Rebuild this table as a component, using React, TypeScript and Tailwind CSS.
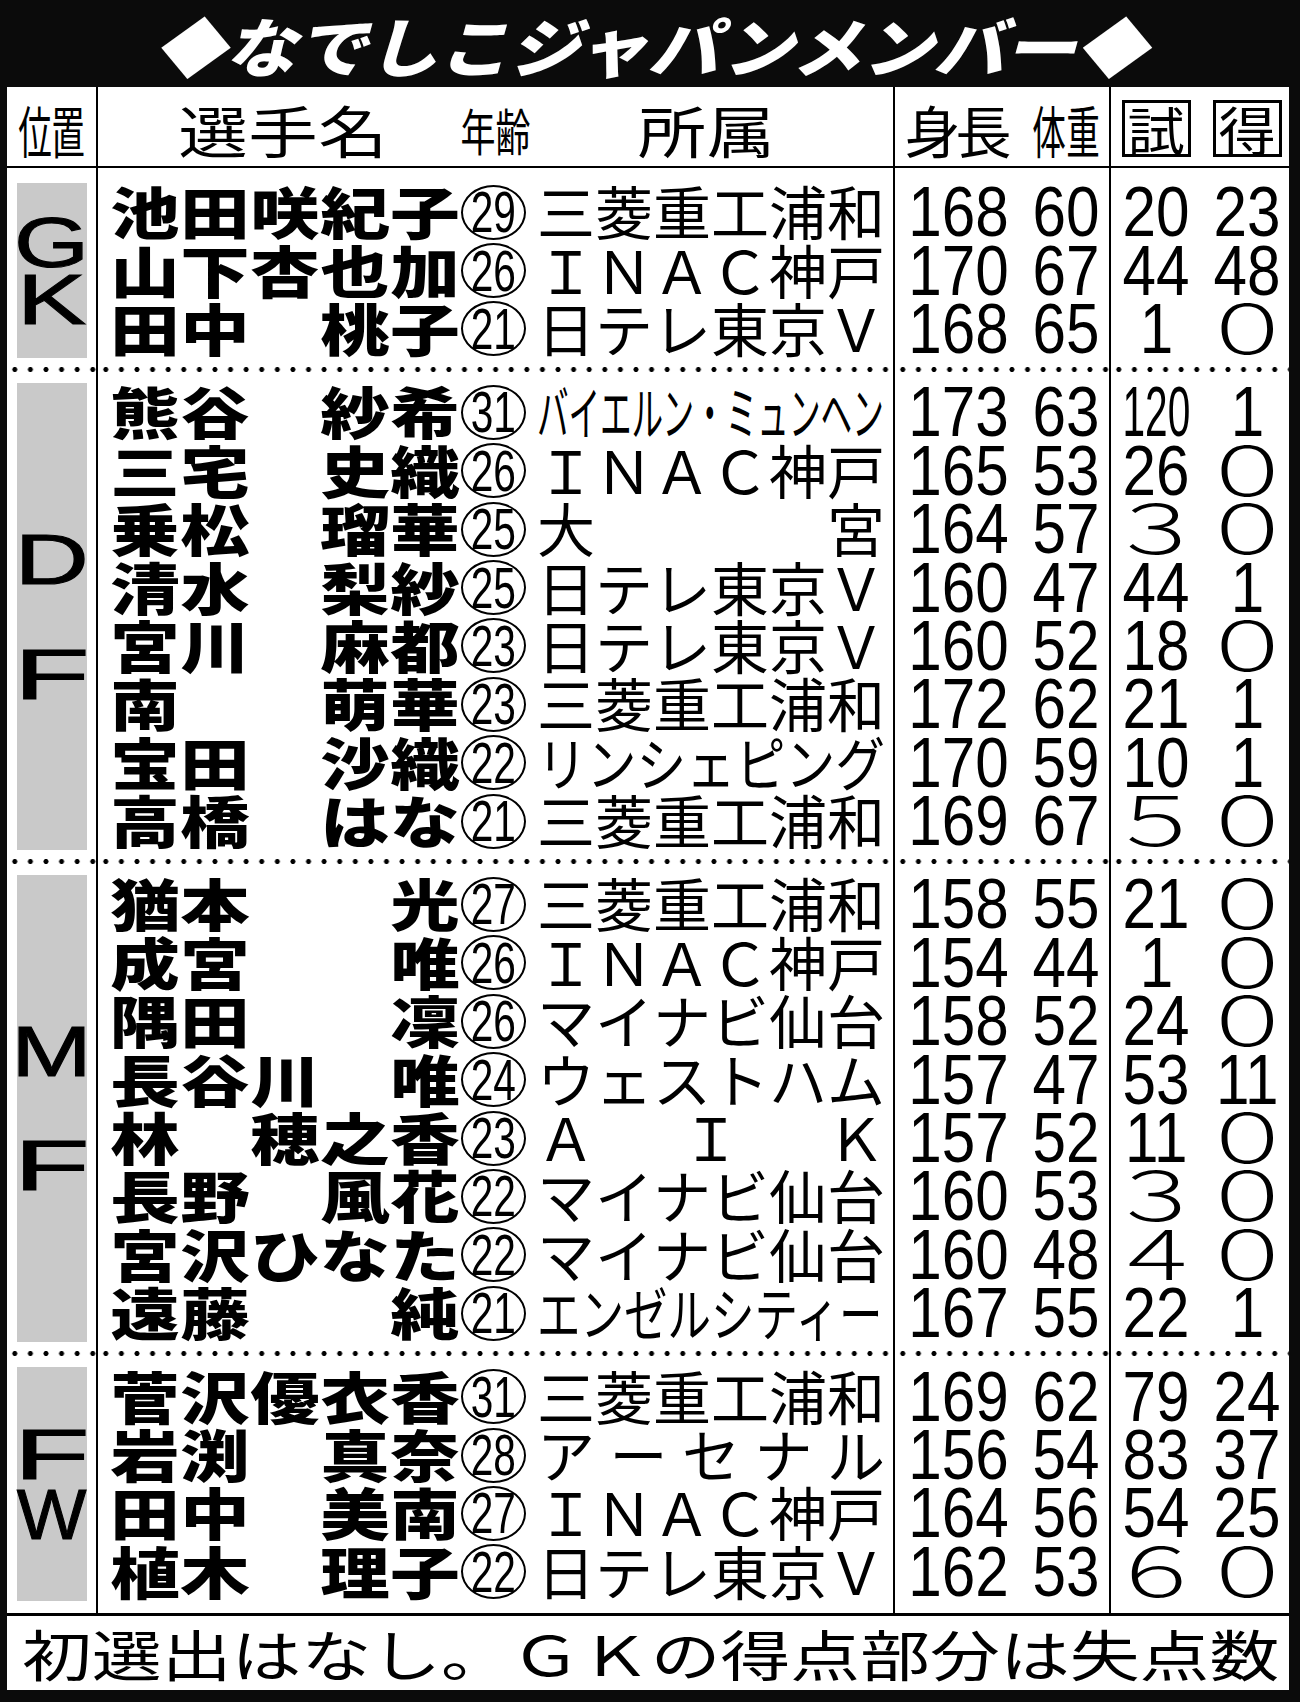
import React from "react";

type Row = {
  name: string;
  age: string;
  club: string;
  h: string;
  w: string;
  caps: string;
  goals: string;
};

type Letter = { c: string; s: string };

type Section = {
  letters: Letter[];
  gap: string;
  pad: string;
  rows: Row[];
};

const JP = "font-['Noto_Sans_CJK_JP','Noto_Sans_CJK_SC',sans-serif]";
const LIB = "font-['Liberation_Sans',Arial,sans-serif]";

const FIT: Record<string, string> = {
  "バイエルン・ミュンヘン": "scale-x-[0.545]",
  "リンシェピング": "scale-x-[0.857]",
  "エンゼルシティー": "scale-x-[0.75]",
};

const sections: Section[] = [
  {
    letters: [
      { c: "G", s: "scale-x-[1.36]" },
      { c: "K", s: "scale-x-[1.46]" },
    ],
    gap: "gap-[6px]",
    pad: "pt-[15px] pb-[9px]",
    rows: [
      { name: "池田咲紀子", age: "29", club: "三菱重工浦和", h: "168", w: "60", caps: "20", goals: "23" },
      { name: "山下杏也加", age: "26", club: "ＩＮＡＣ神戸", h: "170", w: "67", caps: "44", goals: "48" },
      { name: "田中　桃子", age: "21", club: "日テレ東京Ｖ", h: "168", w: "65", caps: "1", goals: "０" },
    ],
  },
  {
    letters: [
      { c: "D", s: "scale-x-[1.45]" },
      { c: "F", s: "scale-x-[1.75]" },
    ],
    gap: "gap-[64px]",
    pad: "pt-[11px] pb-[9px]",
    rows: [
      { name: "熊谷　紗希", age: "31", club: "バイエルン・ミュンヘン", h: "173", w: "63", caps: "120", goals: "1" },
      { name: "三宅　史織", age: "26", club: "ＩＮＡＣ神戸", h: "165", w: "53", caps: "26", goals: "０" },
      { name: "乗松　瑠華", age: "25", club: "大宮", h: "164", w: "57", caps: "３", goals: "０" },
      { name: "清水　梨紗", age: "25", club: "日テレ東京Ｖ", h: "160", w: "47", caps: "44", goals: "1" },
      { name: "宮川　麻都", age: "23", club: "日テレ東京Ｖ", h: "160", w: "52", caps: "18", goals: "０" },
      { name: "南　　萌華", age: "23", club: "三菱重工浦和", h: "172", w: "62", caps: "21", goals: "1" },
      { name: "宝田　沙織", age: "22", club: "リンシェピング", h: "170", w: "59", caps: "10", goals: "1" },
      { name: "高橋　はな", age: "21", club: "三菱重工浦和", h: "169", w: "67", caps: "５", goals: "０" },
    ],
  },
  {
    letters: [
      { c: "M", s: "scale-x-[1.36]" },
      { c: "F", s: "scale-x-[1.75]" },
    ],
    gap: "gap-[63px]",
    pad: "pt-[11px] pb-[9px]",
    rows: [
      { name: "猶本　　光", age: "27", club: "三菱重工浦和", h: "158", w: "55", caps: "21", goals: "０" },
      { name: "成宮　　唯", age: "26", club: "ＩＮＡＣ神戸", h: "154", w: "44", caps: "1", goals: "０" },
      { name: "隅田　　凜", age: "26", club: "マイナビ仙台", h: "158", w: "52", caps: "24", goals: "０" },
      { name: "長谷川　唯", age: "24", club: "ウェストハム", h: "157", w: "47", caps: "53", goals: "11" },
      { name: "林　穂之香", age: "23", club: "ＡＩＫ", h: "157", w: "52", caps: "11", goals: "０" },
      { name: "長野　風花", age: "22", club: "マイナビ仙台", h: "160", w: "53", caps: "３", goals: "０" },
      { name: "宮沢ひなた", age: "22", club: "マイナビ仙台", h: "160", w: "48", caps: "４", goals: "０" },
      { name: "遠藤　　純", age: "21", club: "エンゼルシティー", h: "167", w: "55", caps: "22", goals: "1" },
    ],
  },
  {
    letters: [
      { c: "F", s: "scale-x-[1.75]" },
      { c: "W", s: "scale-x-[1.04]" },
    ],
    gap: "gap-[9px]",
    pad: "pt-[11px] pb-[12px]",
    rows: [
      { name: "菅沢優衣香", age: "31", club: "三菱重工浦和", h: "169", w: "62", caps: "79", goals: "24" },
      { name: "岩渕　真奈", age: "28", club: "アーセナル", h: "156", w: "54", caps: "83", goals: "37" },
      { name: "田中　美南", age: "27", club: "ＩＮＡＣ神戸", h: "164", w: "56", caps: "54", goals: "25" },
      { name: "植木　理子", age: "22", club: "日テレ東京Ｖ", h: "162", w: "53", caps: "６", goals: "０" },
    ],
  },
];

function Club({ text }: { text: string }) {
  const fit = FIT[text];
  if (fit) {
    return (
      <div className="w-[348px] overflow-visible flex items-center">
        <span className={`block origin-left whitespace-nowrap text-[58px] leading-none -translate-y-[2px] ${fit}`}>{text}</span>
      </div>
    );
  }
  const chars = [...text];
  return (
    <div className="w-[348px] flex items-center justify-between">
      {chars.map((ch, i) => (
        <span key={i} className="w-[58px] shrink-0 text-center text-[58px] leading-none -translate-y-[2px]">
          {ch}
        </span>
      ))}
    </div>
  );
}

function Num({ v, w }: { v: string; w: string }) {
  const full = /[０-９]/.test(v);
  if (full) {
    return (
      <div className={`${w} shrink-0 flex justify-center items-center`}>
        <span
          className={`inline-block tracking-[-0.35em] scale-x-[1.45] -translate-x-[17px] -translate-y-[4px] text-[68px] leading-[58px] font-light ${JP}`}
        >
          {v}
        </span>
      </div>
    );
  }
  const sc = v.length === 3 && w === "w-[66px]" ? "scale-x-[0.58]" : "scale-x-[0.86]";
  return (
    <div className={`${w} shrink-0 flex justify-center items-center`}>
      <span className={`inline-block text-[70px] leading-[58px] ${sc} ${LIB}`}>{v}</span>
    </div>
  );
}

function SectionBlock({ s }: { s: Section }) {
  return (
    <div className="grid grid-cols-[91px_797px_216px_178px]">
      <div className={`border-r-2 border-black pl-[10px] pr-[9px] ${s.pad}`}>
        <div className={`h-full bg-[#c9c9c9] flex flex-col items-center justify-center ${s.gap}`}>
          {s.letters.map((l, i) => (
            <div key={i} className={`h-[51px] leading-[51px] text-[71px] [-webkit-text-stroke:1px_#000] ${LIB}`}>
              <span className={`inline-block ${l.s}`}>{l.c}</span>
            </div>
          ))}
        </div>
      </div>
      <div className={`border-r-2 border-black pl-[12px] ${s.pad}`}>
        {s.rows.map((r, i) => (
          <div key={i} className="h-[58.4px] grid grid-cols-[350px_65px_348px] gap-x-[6px] items-center">
            <div className="grid grid-cols-[repeat(5,70px)]">
              {[...r.name].map((ch, j) => (
                <div key={j} className="flex justify-center">
                  <span className="inline-block scale-x-[1.24] -translate-y-[2px] text-[56px] font-black leading-none">{ch}</span>
                </div>
              ))}
            </div>
            <div className="ml-[-5px] w-[65px] h-[55px] rounded-[50%] border-2 border-black flex items-center justify-center">
              <span className={`inline-block scale-x-[0.7] text-[58px] leading-[50px] ${LIB}`}>{r.age}</span>
            </div>
            <Club text={r.club} />
          </div>
        ))}
      </div>
      <div className={`border-r-2 border-black pl-[13px] ${s.pad}`}>
        {s.rows.map((r, i) => (
          <div key={i} className="h-[58.4px] flex items-center">
            <Num v={r.h} w="w-[100px]" />
            <div className="ml-[24px] shrink-0">
              <Num v={r.w} w="w-[67px]" />
            </div>
          </div>
        ))}
      </div>
      <div className={`pl-[12px] ${s.pad}`}>
        {s.rows.map((r, i) => (
          <div key={i} className="h-[58.4px] flex items-center">
            <Num v={r.caps} w="w-[66px]" />
            <div className="ml-[25px] shrink-0">
              <Num v={r.goals} w="w-[66px]" />
            </div>
          </div>
        ))}
      </div>
    </div>
  );
}

const DOTS = "h-[5px] bg-[image:radial-gradient(circle,#000_2.2px,transparent_2.8px)] bg-[length:15.6px_5px]";

function Dotted() {
  return (
    <div className="grid grid-cols-[91px_797px_216px_178px]">
      <div className={`border-r-2 border-black ${DOTS}`} />
      <div className={`border-r-2 border-black ${DOTS}`} />
      <div className={`border-r-2 border-black ${DOTS}`} />
      <div className={DOTS} />
    </div>
  );
}

export default function App() {
  return (
    <div className={`w-[1300px] h-[1702px] bg-[#0b0b0b] flex flex-col text-black ${JP}`}>
      <div className="h-[87px] flex items-center justify-center">
        <h1 className="inline-block scale-x-[1.11] text-[64px] leading-none font-black italic text-white">
          ◆なでしこジャパンメンバー◆
        </h1>
      </div>
      <div className="ml-[7px] mr-[11px] bg-white flex flex-col">
        <div className="h-[81px] grid grid-cols-[91px_797px_216px_178px] border-b-2 border-black">
          <div className="border-r-2 border-black flex items-center justify-center pt-[4px]">
            {["位", "置"].map((c) => (
              <span key={c} className="w-[33px] flex justify-center">
                <span className="inline-block scale-x-[0.6] text-[56px] leading-none">{c}</span>
              </span>
            ))}
          </div>
          <div className="border-r-2 border-black flex items-center pl-[80px] pt-[4px]">
            <div className="flex">
              {["選", "手", "名"].map((c) => (
                <span key={c} className="w-[70px] flex justify-center">
                  <span className="inline-block scale-x-[1.24] text-[56px] leading-none">{c}</span>
                </span>
              ))}
            </div>
            <div className="ml-[72px] flex">
              {["年", "齢"].map((c) => (
                <span key={c} className="w-[35px] flex justify-center">
                  <span className="inline-block scale-x-[0.7] text-[50px] leading-none">{c}</span>
                </span>
              ))}
            </div>
            <div className="ml-[107px] flex">
              {["所", "属"].map((c) => (
                <span key={c} className="w-[69px] flex justify-center">
                  <span className="inline-block scale-x-[1.22] text-[56px] leading-none">{c}</span>
                </span>
              ))}
            </div>
          </div>
          <div className="border-r-2 border-black flex items-center pl-[12px] pt-[4px]">
            <div className="flex">
              {["身", "長"].map((c) => (
                <span key={c} className="w-[51px] flex justify-center">
                  <span className="inline-block text-[56px] leading-none">{c}</span>
                </span>
              ))}
            </div>
            <div className="ml-[23px] flex">
              {["体", "重"].map((c) => (
                <span key={c} className="w-[34px] flex justify-center">
                  <span className="inline-block scale-x-[0.6] text-[56px] leading-none">{c}</span>
                </span>
              ))}
            </div>
          </div>
          <div className="flex items-center pl-[11px] gap-[22px] pt-[4px]">
            {["試", "得"].map((c) => (
              <div key={c} className="w-[69px] h-[57px] border-[3px] border-black flex items-center justify-center">
                <span className="inline-block scale-x-[1.1] text-[52px] leading-none">{c}</span>
              </div>
            ))}
          </div>
        </div>
        {sections.map((s, i) => (
          <React.Fragment key={i}>
            {i > 0 && <Dotted />}
            <SectionBlock s={s} />
          </React.Fragment>
        ))}
        <div className="h-[77px] border-t-[3px] border-black flex items-center pl-[15px]">
          <p className="inline-block origin-left scale-x-[1.27] whitespace-nowrap text-[55px] leading-none">
            初選出はなし。ＧＫの得点部分は失点数
          </p>
        </div>
      </div>
    </div>
  );
}
